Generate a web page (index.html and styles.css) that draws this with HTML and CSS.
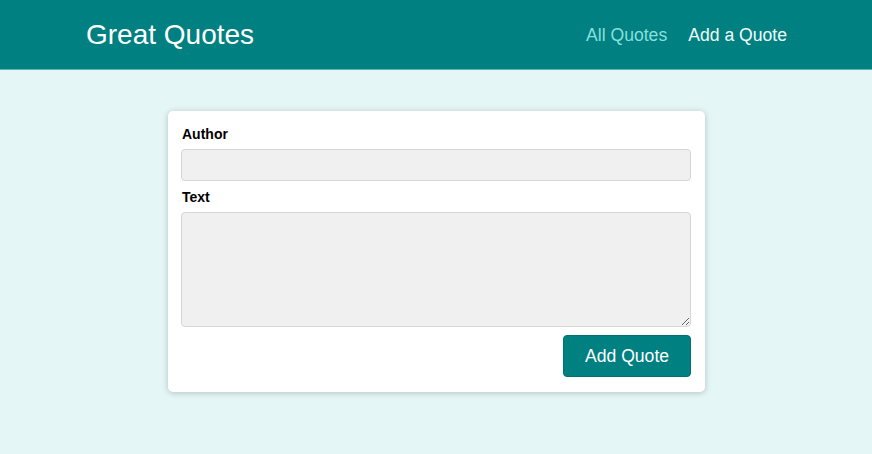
FILE: index.html
```html
<!DOCTYPE html>
<html lang="en">
<head>
<meta charset="utf-8">
<title>Great Quotes</title>
<link rel="stylesheet" href="styles.css">
</head>
<body>
<header class="header">
  <div class="logo">Great Quotes</div>
  <nav class="nav">
    <a href="#" class="nav-link">All Quotes</a>
    <a href="#" class="nav-link active">Add a Quote</a>
  </nav>
</header>
<main class="main">
  <form class="card">
    <div class="control">
      <label class="label" for="author">Author</label>
      <input class="input" type="text" id="author">
    </div>
    <div class="control">
      <label class="label" for="text">Text</label>
      <textarea class="textarea" id="text"></textarea>
    </div>
    <div class="actions">
      <button class="btn" type="button">Add Quote</button>
    </div>
  </form>
</main>
</body>
</html>
```
FILE: styles.css
```css
* { box-sizing: border-box; }
html, body { margin: 0; padding: 0; }
body {
  background: #e5f6f6;
  font-family: "Liberation Sans", Arial, sans-serif;
  height: 454px;
  overflow: hidden;
}
.header {
  height: 70px;
  background: #008080;
  border-bottom: 1px solid #58b5b5;
  display: flex;
  align-items: center;
  justify-content: space-between;
  padding: 1px 85px 0 86px;
}
.logo {
  color: #ffffff;
  font-size: 28px;
}
.nav {
  display: flex;
  gap: 21px;
  padding-top: 1px;
}
.nav-link {
  color: #88dfdf;
  text-decoration: none;
  font-size: 17.6px;
}
.nav-link.active {
  color: #f0fcfc;
}
.main {
  display: flex;
  justify-content: center;
  padding-top: 41px;
}
.card {
  width: 537px;
  margin-left: 1px;
  background: #ffffff;
  border-radius: 5px;
  box-shadow: 0 1px 6px rgba(0, 0, 0, 0.22);
  padding: 13px 14px 15px 13px;
}
.control {
  margin-bottom: 6px;
}
.label {
  display: block;
  font-weight: bold;
  font-size: 14px;
  line-height: 17px;
  padding-top: 2px;
  margin-bottom: 6px;
  padding-left: 1px;
  color: #000;
}
.input, .textarea {
  display: block;
  width: 100%;
  background: #f0f0f0;
  border: 1px solid #d6d6d6;
  border-radius: 4px;
  font: inherit;
  margin: 0;
}
.input { height: 32px; }
.textarea { height: 115px; resize: vertical; }
.actions {
  display: flex;
  justify-content: flex-end;
  padding-top: 2px;
}
.btn {
  height: 42px;
  width: 128px;
  background: #008080;
  color: #ffffff;
  border: 1px solid #007070;
  border-radius: 4px;
  font-family: "Liberation Sans", Arial, sans-serif;
  font-size: 17.6px;
  cursor: pointer;
}
```
